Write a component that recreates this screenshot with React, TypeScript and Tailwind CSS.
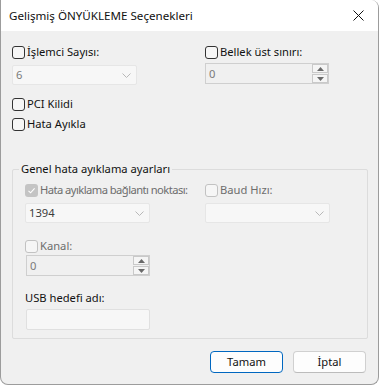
import React from 'react';

type BoxState = 'off' | 'disabled' | 'disabledChecked';

const Box: React.FC<{ state: BoxState }> = ({ state }) => {
  if (state === 'disabledChecked') {
    return (
      <span className="w-[13px] h-[13px] rounded-[3px] bg-[#c4c4c4] flex items-center justify-center shrink-0">
        <svg width="9" height="9" viewBox="0 0 9 9">
          <path d="M1.5 4.8 L3.6 6.8 L7.6 2.3" fill="none" stroke="#ffffff" strokeWidth="1.1" />
        </svg>
      </span>
    );
  }
  return (
    <span
      className={`w-[13px] h-[13px] rounded-[3px] border shrink-0 ${
        state === 'off' ? 'border-[#333333] bg-[#f6f6f6]' : 'border-[#c2c2c2] bg-[#f6f6f6]'
      }`}
    />
  );
};

const CheckRow: React.FC<{ state: BoxState; label: string; dim?: boolean; tight?: boolean }> = ({
  state,
  label,
  dim,
  tight,
}) => (
  <div className="flex items-center h-[16px] gap-[2px] whitespace-nowrap">
    <Box state={state} />
    <span className={`${dim ? 'text-[#6d6d6d]' : 'text-[#111111]'} ${tight ? 'tracking-[-0.55px]' : ''}`}>{label}</span>
  </div>
);

const Chevron = () => (
  <svg width="9" height="5" viewBox="0 0 9 5" className="shrink-0">
    <path d="M0.5 0.5 L4.5 4.5 L8.5 0.5" fill="none" stroke="#b8b8b8" strokeWidth="1" />
  </svg>
);

const Combo: React.FC<{ value?: string; dark?: boolean }> = ({ value, dark }) => (
  <div className="w-[125px] h-[20px] bg-[#f7f7f7] border border-[#e6e6e6] rounded-[2px] flex items-center justify-between pl-[3px] pr-[5px]">
    <span className={dark ? 'text-[#3c3c3c]' : 'text-[#7a7a7a]'}>{value ?? ''}</span>
    <Chevron />
  </div>
);

const Spin: React.FC<{ value: string }> = ({ value }) => (
  <div className="w-[124px] h-[21px] bg-[#f0f0f0] border border-[#cfcfcf] flex items-stretch">
    <span className="flex-1 flex items-center pl-[3px] text-[#7a7a7a]">{value}</span>
    <div className="w-[16px] flex flex-col gap-[1px]">
      <div className="flex-1 border border-[#c9c9c9] bg-[#f5f5f5] flex items-center justify-center">
        <svg width="7" height="4" viewBox="0 0 7 4">
          <path d="M0 4 L3.5 0 L7 4 Z" fill="#6a6a6a" />
        </svg>
      </div>
      <div className="flex-1 border border-[#c9c9c9] bg-[#f5f5f5] flex items-center justify-center">
        <svg width="7" height="4" viewBox="0 0 7 4">
          <path d="M0 0 L3.5 4 L7 0 Z" fill="#6a6a6a" />
        </svg>
      </div>
    </div>
  </div>
);

export default function App() {
  return (
    <div
      className="w-[379px] h-[385px] bg-white text-[11.2px] leading-[16px] text-[#111111]"
      style={{ fontFamily: '"Segoe UI", "Noto Sans", sans-serif' }}
    >
      <div className="w-[379px] h-[385px] flex flex-col border-l border-r border-b border-[#9c9c9c] rounded-tr-[8px] rounded-br-[8px] rounded-bl-[8px] overflow-hidden bg-[#f0f0f0]">
        {/* Title bar */}
        <div className="h-[31px] bg-white flex items-center justify-between pl-[8px] pr-[14px] shrink-0">
          <span className="text-[11.6px]">Gelişmiş ÖNYÜKLEME Seçenekleri</span>
          <svg width="11" height="11" viewBox="0 0 11 11">
            <path d="M0.5 0.5 L10.5 10.5 M10.5 0.5 L0.5 10.5" stroke="#111111" strokeWidth="1" />
          </svg>
        </div>

        <div className="flex flex-col px-[11px]">
          <div className="grid grid-cols-[193px_1fr] mt-[13px]">
            <div className="flex flex-col">
              <CheckRow state="off" label="İşlemci Sayısı:" />
              <div className="mt-[5px]">
                <Combo value="6" />
              </div>
            </div>
            <div className="flex flex-col">
              <CheckRow state="off" label="Bellek üst sınırı:" />
              <div className="mt-[3px]">
                <Spin value="0" />
              </div>
            </div>
          </div>

          <div className="mt-[11px]">
            <CheckRow state="off" label="PCI Kilidi" />
          </div>
          <div className="mt-[4px]">
            <CheckRow state="off" label="Hata Ayıkla" />
          </div>

          {/* Group box */}
          <div className="relative mt-[37px] w-[356px] h-[170px] border border-[#dcdcdc] rounded-[2px] flex flex-col pl-[12px]">
            <span className="absolute left-[6px] top-[-9px] px-[2px] bg-[#f0f0f0] whitespace-nowrap">Genel hata ayıklama ayarları</span>
            <div className="grid grid-cols-[180px_1fr] mt-[12px]">
              <div className="flex flex-col">
                <CheckRow state="disabledChecked" label="Hata ayıklama bağlantı noktası:" dim tight />
                <div className="mt-[5px]">
                  <Combo value="1394" dark />
                </div>
              </div>
              <div className="flex flex-col">
                <CheckRow state="disabled" label="Baud Hızı:" dim />
                <div className="mt-[5px]">
                  <Combo />
                </div>
              </div>
            </div>
            <div className="mt-[15px]">
              <CheckRow state="disabled" label="Kanal:" dim />
            </div>
            <div className="mt-[1px] pl-[1px]">
              <Spin value="0" />
            </div>
            <div className="mt-[14px] h-[16px] flex items-center">USB hedefi adı:</div>
            <div className="mt-[3px] pl-[1px]">
              <div className="w-[124px] h-[21px] bg-[#f7f7f7] border border-[#e0e0e0] rounded-[2px]" />
            </div>
          </div>

          {/* Buttons */}
          <div className="flex justify-end gap-[10px] mt-[12px] pr-[1px]">
            <button className="w-[73px] h-[22px] rounded-[4px] border border-[#0067c0] bg-[#fdfdfd] flex items-center justify-center">
              Tamam
            </button>
            <button className="w-[73px] h-[22px] rounded-[4px] border border-[#d0d0d0] border-b-[#bcbcbc] bg-[#fdfdfd] flex items-center justify-center">
              İptal
            </button>
          </div>
        </div>
      </div>
    </div>
  );
}
